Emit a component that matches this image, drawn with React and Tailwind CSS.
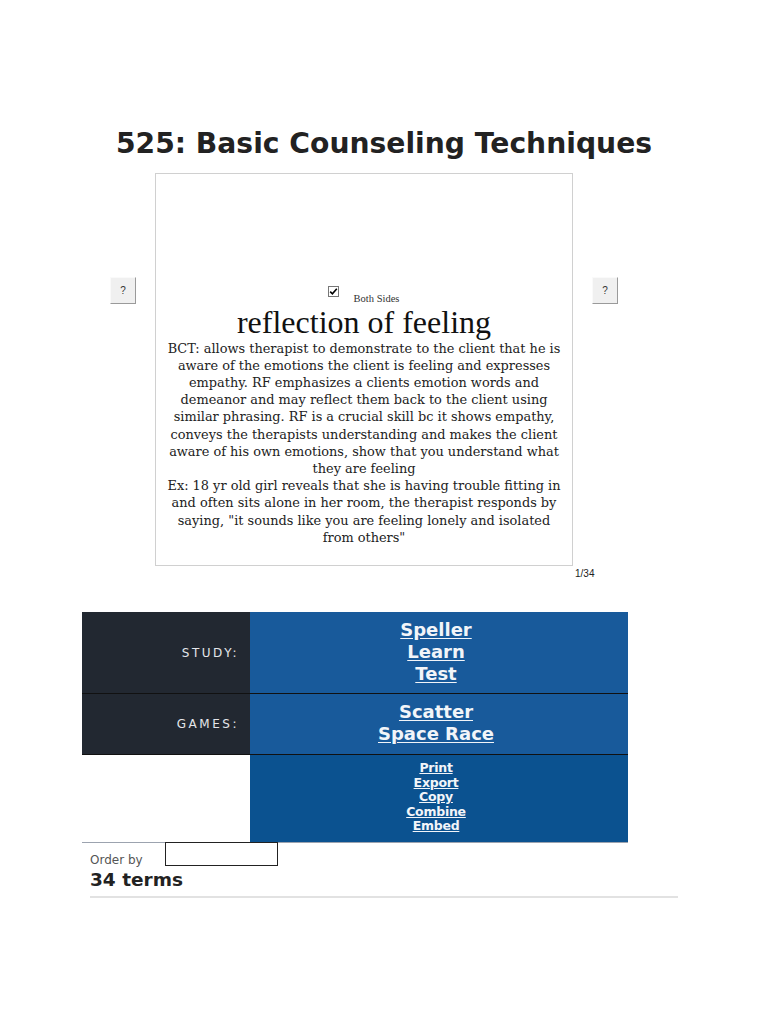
import React from 'react'

const SERIF = "font-['DejaVu_Serif',serif]"
const SANS = "font-['DejaVu_Sans',sans-serif]"

// back side of the card, broken where the reference breaks
const BACK_LINES = [
  'BCT: allows therapist to demonstrate to the client that he is',
  'aware of the emotions the client is feeling and expresses',
  'empathy. RF emphasizes a clients emotion words and',
  'demeanor and may reflect them back to the client using',
  'similar phrasing. RF is a crucial skill bc it shows empathy,',
  'conveys the therapists understanding and makes the client',
  'aware of his own emotions, show that you understand what',
  'they are feeling',
  'Ex: 18 yr old girl reveals that she is having trouble fitting in',
  'and often sits alone in her room, the therapist responds by',
  'saying, "it sounds like you are feeling lonely and isolated',
  'from others"',
]

const ROWS = [
  { label: 'STUDY:', links: ['Speller', 'Learn', 'Test'], h: 'h-[81px]' },
  { label: 'GAMES:', links: ['Scatter', 'Space Race'], h: 'h-[61px]' },
]

const TOOLS = ['Print', 'Export', 'Copy', 'Combine', 'Embed']

function NavButton() {
  return (
    <button
      type="button"
      className="mt-[104px] w-[26px] h-[27px] shrink-0 bg-[#f0f0f0] border border-t-[#fafafa] border-l-[#fafafa] border-r-[#9a9a9a] border-b-[#9a9a9a] text-[10px] text-[#333] font-['Liberation_Sans',sans-serif] leading-none"
    >
      ?
    </button>
  )
}

export default function App() {
  return (
    <div className="w-[768px] min-h-[1024px] bg-white text-black">
      <h1 className={`${SANS} pt-[127px] text-center text-[28.2px] font-bold leading-[34px] text-[#222]`}>
        525: Basic Counseling Techniques
      </h1>

      {/* flashcard row */}
      <div className="mt-[12px] ml-[110px] flex items-start gap-[19px]">
        <NavButton />
        <div className="w-[418px] h-[393px] border border-[#d0d0d0] flex flex-col justify-end items-center px-[4px] pb-[19px]">
          <div className="flex items-start ml-[-1px]">
            <span className="w-[11px] h-[11px] border border-[#777] bg-white flex items-center justify-center mt-[1px]">
              <svg width="9" height="9" viewBox="0 0 9 9">
                <path d="M1.2 4.6 L3.4 6.8 L7.8 1.8" fill="none" stroke="#000" strokeWidth="1.6" />
              </svg>
            </span>
            <span className="font-['Liberation_Serif',serif] ml-[15px] mt-[8px] text-[10.5px] leading-[11px] text-[#333]">Both Sides</span>
          </div>
          <div className="font-['Liberation_Serif',serif] text-[32px] leading-[36px] text-[#111]">reflection of feeling</div>
          <div className={`${SERIF} text-[12.9px] leading-[17.2px] text-[#222] text-center w-full whitespace-nowrap`}>
            {BACK_LINES.map((t, i) => <div key={i}>{t}</div>)}
          </div>
        </div>
        <NavButton />
      </div>
      <div className="ml-[575px] mt-[2px] text-[10px] leading-[12px] font-['Liberation_Sans',sans-serif] text-[#222]">1/34</div>

      {/* study / games table */}
      <div className={`${SANS} mt-[32px] ml-[82px] w-[546px]`}>
        {ROWS.map((row, i) => (
          <div key={row.label} className={`flex ${row.h} ${i > 0 ? 'border-t border-[#111]' : ''}`}>
            <div className="w-[168px] bg-[#222831] flex items-center justify-end pr-[11px] text-[12px] tracking-[0.21em] text-[#e4e6ea]">
              {row.label}
            </div>
            <div className="flex-1 bg-[#185a9b] flex flex-col items-center pt-[7px] pr-[6px]">
              {row.links.map(l => (
                <a key={l} href="#" className="text-[18px] font-bold leading-[22px] text-[#f2f5f9] underline underline-offset-2">{l}</a>
              ))}
            </div>
          </div>
        ))}
        <div className="flex h-[89px] border-t border-[#111] border-b border-b-[#9ca3af]">
          <div className="w-[168px] bg-white" />
          <div className="flex-1 bg-[#0b5290] flex flex-col items-center pt-[6px] pr-[6px]">
            {TOOLS.map(l => (
              <a key={l} href="#" className="text-[12.5px] font-bold leading-[14.5px] tracking-[-0.02em] text-[#f2f5f9] underline">{l}</a>
            ))}
          </div>
        </div>
      </div>

      {/* terms header */}
      <div className={`${SANS} ml-[90px] w-[588px]`}>
        <div className="flex items-end gap-[22px]">
          <span className="text-[12px] leading-[14px] text-[#555] mb-[-1px]">Order by</span>
          <div className="w-[113px] h-[24px] border border-[#222] bg-white mt-[-1px]" />
        </div>
        <div className="text-[18.5px] font-bold leading-[22px] text-[#222] mt-[3px]">34 terms</div>
        <div className="mt-[5px] h-[2px] bg-[#e2e2e2]" />
      </div>
    </div>
  )
}
